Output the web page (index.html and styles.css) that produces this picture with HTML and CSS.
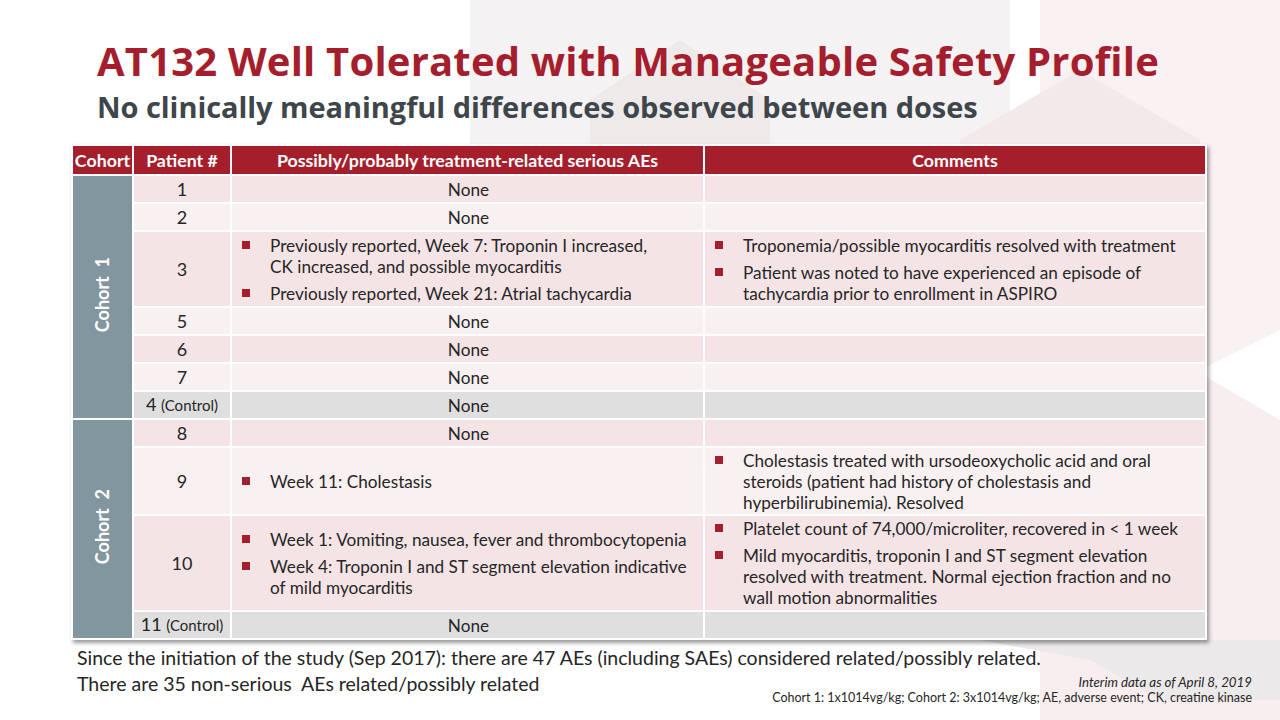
FILE: index.html
```html
<!DOCTYPE html>
<html lang="en">
<head>
<meta charset="utf-8">
<title>AT132 Well Tolerated with Manageable Safety Profile</title>
<link rel="stylesheet" href="styles.css">
</head>
<body>
<div class="slide">
  <svg class="bg" width="1280" height="720" viewBox="0 0 1280 720" aria-hidden="true">
    <polygon points="470,0 1010,0 1010,300 740,420 470,300" fill="#F4F2F2"/>
    <polygon points="1040,0 1280,0 1280,330 1160,390 1040,330" fill="#FAF1F2"/>
    <polygon points="590,100 680,40 770,100 770,150 590,150" fill="#EFEAEA"/>
    <polygon points="960,140 1080,70 1200,140 1200,150 960,150" fill="#F1E9EA"/>
    <polygon points="1040,420 1160,350 1280,420 1280,720 1040,720" fill="#F8EEEF"/>
    <polygon points="980,640 1280,640 1280,700 1160,700 1090,660" fill="#ECE9EA"/>
  </svg>

  <header class="heading">
    <h1 class="title">AT132 Well Tolerated with Manageable Safety Profile</h1>
    <h2 class="subtitle">No clinically meaningful differences observed between doses</h2>
  </header>

  <div class="table-wrap">
    <table class="sae">
      <colgroup>
        <col class="c-cohort">
        <col class="c-patient">
        <col class="c-ae">
        <col class="c-comment">
      </colgroup>
      <thead>
        <tr class="r-head">
          <th>Cohort</th>
          <th>Patient #</th>
          <th>Possibly/probably treatment-related serious AEs</th>
          <th>Comments</th>
        </tr>
      </thead>
      <tbody>
        <tr class="pink r-s">
          <td class="cohort" rowspan="7"><span>Cohort&nbsp; 1</span></td>
          <td class="pt">1</td>
          <td class="none">None</td>
          <td></td>
        </tr>
        <tr class="light r-s">
          <td class="pt">2</td>
          <td class="none">None</td>
          <td></td>
        </tr>
        <tr class="pink r-3">
          <td class="pt">3</td>
          <td>
            <ul class="bul">
              <li>Previously reported, Week 7: Troponin I increased,<br>CK increased, and possible myocarditis</li>
              <li>Previously reported, Week 21: Atrial tachycardia</li>
            </ul>
          </td>
          <td>
            <ul class="bul">
              <li>Troponemia/possible myocarditis resolved with treatment</li>
              <li>Patient was noted to have experienced an episode of tachycardia prior to enrollment in ASPIRO</li>
            </ul>
          </td>
        </tr>
        <tr class="light r-s">
          <td class="pt">5</td>
          <td class="none">None</td>
          <td></td>
        </tr>
        <tr class="pink r-s">
          <td class="pt">6</td>
          <td class="none">None</td>
          <td></td>
        </tr>
        <tr class="light r-s">
          <td class="pt">7</td>
          <td class="none">None</td>
          <td></td>
        </tr>
        <tr class="gray r-s">
          <td class="pt">4 <small>(Control)</small></td>
          <td class="none">None</td>
          <td></td>
        </tr>
        <tr class="pink r-s">
          <td class="cohort" rowspan="5"><span>Cohort&nbsp; 2</span></td>
          <td class="pt">8</td>
          <td class="none">None</td>
          <td></td>
        </tr>
        <tr class="light r-9">
          <td class="pt">9</td>
          <td>
            <ul class="bul">
              <li>Week 11: Cholestasis</li>
            </ul>
          </td>
          <td>
            <ul class="bul">
              <li>Cholestasis treated with ursodeoxycholic acid and oral steroids (patient had history of cholestasis and hyperbilirubinemia). Resolved</li>
            </ul>
          </td>
        </tr>
        <tr class="pink r-10">
          <td class="pt">10</td>
          <td>
            <ul class="bul">
              <li>Week 1: Vomiting, nausea, fever and thrombocytopenia</li>
              <li>Week 4: Troponin I and ST segment elevation indicative of mild myocarditis</li>
            </ul>
          </td>
          <td>
            <ul class="bul">
              <li>Platelet count of 74,000/microliter, recovered in &lt; 1 week</li>
              <li>Mild myocarditis, troponin I and ST segment elevation resolved with treatment. Normal ejection fraction and no wall motion abnormalities</li>
            </ul>
          </td>
        </tr>
        <tr class="gray r-s">
          <td class="pt">11 <small>(Control)</small></td>
          <td class="none">None</td>
          <td></td>
        </tr>
      </tbody>
    </table>
  </div>

  <footer class="foot">
    <p class="summary">Since the initiation of the study (Sep 2017): there are 47 AEs (including SAEs) considered related/possibly related.</p>
    <div class="foot-row">
      <p class="summary">There are 35 non-serious&nbsp; AEs related/possibly related</p>
      <div class="notes">
        <p class="interim">Interim data as of April 8, 2019</p>
        <p>Cohort 1: 1x1014vg/kg; Cohort 2: 3x1014vg/kg; AE, adverse event; CK, creatine kinase</p>
      </div>
    </div>
  </footer>
</div>
</body>
</html>
```

FILE: styles.css
```css
* { box-sizing: border-box; }

html, body {
  margin: 0;
  padding: 0;
  background: #ffffff;
}

body {
  font-family: Lato, "Open Sans", "Liberation Sans", sans-serif;
  color: #262626;
}

.slide {
  position: relative;
  width: 1280px;
  height: 720px;
  overflow: hidden;
  background: #ffffff;
}

.bg {
  position: absolute;
  left: 0;
  top: 0;
  z-index: 0;
}

.heading,
.table-wrap,
.foot {
  position: relative;
  z-index: 1;
}

.heading {
  padding: 38px 0 0 97px;
  height: 144px;
}

.title {
  margin: 0;
  font-family: "Open Sans", Lato, sans-serif;
  font-size: 40px;
  line-height: 46px;
  font-weight: 700;
  color: #A51E2E;
  letter-spacing: 0.2px;
}

.subtitle {
  margin: 6px 0 0;
  font-family: "Open Sans", Lato, sans-serif;
  font-size: 29px;
  line-height: 34px;
  font-weight: 700;
  color: #3E464C;
  letter-spacing: -0.05px;
}

.table-wrap {
  margin-left: 71px;
  width: 1136px;
}

.sae {
  width: 1136px;
  border-collapse: separate;
  border-spacing: 2px;
  table-layout: fixed;
  background: #ffffff;
  box-shadow: 2px 3px 4px rgba(0, 0, 0, 0.4);
  font-size: 17.2px;
  color: #262626;
}

.c-cohort { width: 59px; }
.c-patient { width: 96px; }
.c-ae { width: 471px; }
.c-comment { width: 500px; }

.sae th {
  background: #A51E2C;
  color: #ffffff;
  font-weight: 700;
  font-size: 17.8px;
  text-align: center;
  padding: 0;
  height: 28px;
  line-height: 20px;
  white-space: nowrap;
}

.sae td {
  padding: 0 8px 0 10px;
  vertical-align: middle;
  line-height: 21px;
}

.pink td { background: #F4E4E6; }
.light td { background: #F9F0F1; }
.gray td { background: #E0DFDF; }

.r-s td { height: 26px; }
.r-3 td { height: 74px; }
.r-9 td { height: 66px; }
.r-10 td { height: 94px; }

.sae td.cohort {
  background: #82969F;
  padding: 0;
  text-align: center;
}

.cohort span {
  display: inline-block;
  writing-mode: vertical-rl;
  transform: rotate(180deg);
  color: #ffffff;
  font-weight: 700;
  font-size: 18px;
}

.sae td.pt {
  text-align: center;
  font-size: 18px;
  padding: 0;
  white-space: nowrap;
}

.pt small {
  font-size: 15px;
}

.sae td.none {
  text-align: center;
}

.bul {
  list-style: none;
  margin: 0;
  padding: 0 0 0 28px;
}

.bul li {
  position: relative;
}

.bul li + li {
  margin-top: 6px;
}

.bul li::before {
  content: "";
  position: absolute;
  left: -28px;
  top: 6px;
  width: 8px;
  height: 8px;
  background: #A51E2C;
}

.foot {
  padding: 5px 28px 0 77px;
}

.summary {
  margin: 0;
  font-size: 19.5px;
  line-height: 26px;
  color: #262626;
  white-space: nowrap;
}

.foot-row {
  display: flex;
  justify-content: space-between;
  align-items: flex-start;
}

.notes {
  text-align: right;
  padding-top: 3px;
  white-space: nowrap;
}

.notes p {
  margin: 0;
  font-size: 12.5px;
  line-height: 16px;
  color: #262626;
}

.notes .interim {
  font-style: italic;
  font-size: 13.3px;
}
```
